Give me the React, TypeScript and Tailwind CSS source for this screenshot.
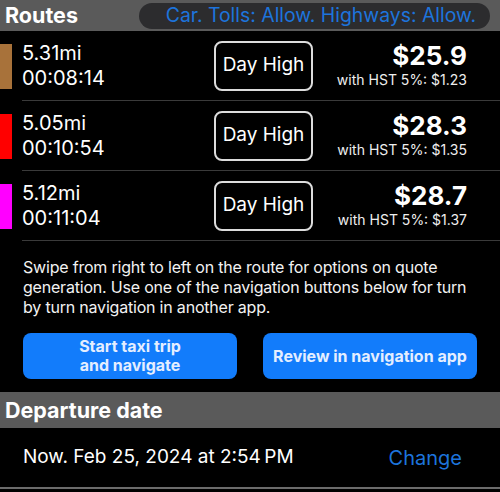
const routes = [
  { miles: "5.31mi", time: "00:08:14", color: "bg-[#a8723a]", price: "$25.9", hst: "with HST 5%: $1.23" },
  { miles: "5.05mi", time: "00:10:54", color: "bg-[#ff0000]", price: "$28.3", hst: "with HST 5%: $1.35" },
  { miles: "5.12mi", time: "00:11:04", color: "bg-[#ff00ff]", price: "$28.7", hst: "with HST 5%: $1.37" },
];

function RouteRow({ r }: { r: (typeof routes)[number] }) {
  return (
    <div className="flex h-[70px] items-center">
      <div className={`h-[45px] w-[12px] ${r.color}`} />
      <div className="ml-[10px] flex h-full flex-1 items-center border-b border-[#3a3a3a]">
        <div className="w-[192px] text-[20px] leading-[25px] text-white">
          <div>{r.miles}</div>
          <div>{r.time}</div>
        </div>
        <div className="flex h-[50px] w-[99px] items-center justify-center rounded-[8px] border-2 border-[#dcdcdc] text-[19px] text-white">
          Day High
        </div>
        <div className="flex flex-1 flex-col items-end pr-[33px] text-white">
          <div className="text-[26px] font-bold leading-[28px]">{r.price}</div>
          <div className="text-[14px] leading-[19px] text-[#eeeeee]">{r.hst}</div>
        </div>
      </div>
    </div>
  );
}

export default function App() {
  return (
    <div className="h-[492px] w-[500px] overflow-hidden bg-black font-['Inter',sans-serif]">
      <div className="flex h-[31px] items-center bg-[#5a5a5a]">
        <span className="pl-[5px] text-[21.5px] font-bold text-white">Routes</span>
        <div className="ml-auto mr-[10px] flex h-[26px] items-center rounded-full bg-[#2c2c2e] pl-[27px] pr-[14px] text-[19.4px] text-[#1d74dc]">
          Car. Tolls: Allow. Highways: Allow.
        </div>
      </div>

      {routes.map((r) => (
        <RouteRow key={r.miles} r={r} />
      ))}

      <p className="px-[23px] pt-[16px] text-[16px] leading-[20px] tracking-[-0.2px] text-[#f2f2f2]">
        Swipe from right to left on the route for options on quote generation. Use one of the navigation buttons below for turn by turn navigation in another app.
      </p>

      <div className="mt-[16px] grid grid-cols-2 gap-[26px] px-[23px]">
        <button className="h-[46px] rounded-[8px] bg-[#127cfb] text-[16px] font-bold leading-[19px] text-[#e4eeff]">
          Start taxi trip
          <br />
          and navigate
        </button>
        <button className="h-[46px] rounded-[8px] bg-[#127cfb] text-[16px] font-bold text-[#e4eeff]">
          Review in navigation app
        </button>
      </div>

      <div className="mt-[13px] flex h-[36px] items-center bg-[#5a5a5a] pl-[5px] text-[21.5px] font-bold text-white">
        Departure date
      </div>

      <div className="flex h-[61px] items-center justify-between border-b-2 border-[#6b6b6b] pl-[23px] pr-[38px]">
        <span className="text-[19px] text-white">Now. Feb 25, 2024 at 2:54{"\u202f"}PM</span>
        <span className="text-[20px] text-[#1d74dc]">Change</span>
      </div>
    </div>
  );
}
